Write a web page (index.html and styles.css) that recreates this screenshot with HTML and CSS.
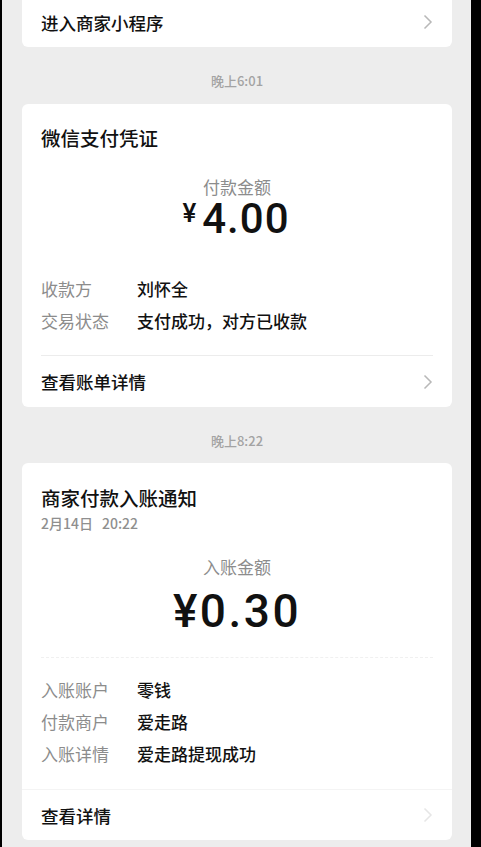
FILE: index.html
```html
<!DOCTYPE html>
<html lang="zh-CN">
<head>
    <meta charset="UTF-8">
    <meta name="viewport" content="width=device-width, initial-scale=1.0">
    <title>微信支付</title>
    <link rel="stylesheet" href="styles.css">
</head>
<body>
    <div class="frame">
        <div class="screen">
            <!-- card cut off by the top of the screen -->
            <div class="card card-top">
                <div class="link-row">
                    <span>进入商家小程序</span>
                    <svg class="chevron" width="10" height="16" viewBox="0 0 10 16"><polyline points="1.5,1.5 8,8 1.5,14.5"/></svg>
                </div>
            </div>

            <div class="time">晚上6:01</div>

            <div class="card">
                <div class="card-body">
                    <h2 class="card-title">微信支付凭证</h2>
                    <div class="amount-label">付款金额</div>
                    <div class="amount amount-small-sign"><span class="sign">¥</span>4.00</div>
                    <div class="info-list">
                        <div class="info-row"><span class="info-key">收款方</span><span class="info-val">刘怀全</span></div>
                        <div class="info-row"><span class="info-key">交易状态</span><span class="info-val">支付成功，对方已收款</span></div>
                    </div>
                </div>
                <div class="link-row link-inset">
                    <span>查看账单详情</span>
                    <svg class="chevron" width="10" height="16" viewBox="0 0 10 16"><polyline points="1.5,1.5 8,8 1.5,14.5"/></svg>
                </div>
            </div>

            <div class="time">晚上8:22</div>

            <div class="card">
                <div class="card-body">
                    <h2 class="card-title title-notice">商家付款入账通知</h2>
                    <div class="card-date"><span>2月14日</span><span>20:22</span></div>
                    <div class="amount-label label-notice">入账金额</div>
                    <div class="amount amount-big">¥0.30</div>
                    <div class="dash"></div>
                    <div class="info-list info-notice">
                        <div class="info-row"><span class="info-key">入账账户</span><span class="info-val">零钱</span></div>
                        <div class="info-row"><span class="info-key">付款商户</span><span class="info-val">爱走路</span></div>
                        <div class="info-row"><span class="info-key">入账详情</span><span class="info-val">爱走路提现成功</span></div>
                    </div>
                </div>
                <div class="link-row link-full">
                    <span>查看详情</span>
                    <svg class="chevron chevron-faint" width="10" height="16" viewBox="0 0 10 16"><polyline points="1.5,1.5 8,8 1.5,14.5"/></svg>
                </div>
            </div>
        </div>
        <div class="bezel"></div>
    </div>
</body>
</html>
```

FILE: styles.css
```css
html {
    background-color: #000;
}

body {
    margin: 0;
    padding: 0;
    background-color: #000;
    font-family: "Noto Sans CJK SC", "Noto Sans", sans-serif;
    color: #111;
    height: 847px;
    overflow: hidden;
}

.frame {
    display: flex;
    height: 847px;
    padding-left: 2px;
}

.screen {
    width: 430px;
    flex-shrink: 0;
    background-color: #ededed;
    padding: 0 19px 0 20px;
    overflow: hidden;
}

.bezel {
    flex: 1;
    background-color: #000;
}

.card {
    background-color: #fff;
    border-radius: 6px;
}

.card-top {
    margin-top: -3px;
    border-radius: 0 0 6px 6px;
}

.card-body {
    padding: 0 19px;
}

.time {
    padding: 24px 0 13px;
    line-height: 20px;
    font-size: 13px;
    font-weight: 500;
    color: #a3a3a3;
    text-align: center;
}

.time + .card + .time {
    padding-bottom: 12px;
}

.link-row {
    display: flex;
    justify-content: space-between;
    align-items: center;
    height: 50px;
    padding: 0 19px;
    font-size: 17.5px;
    font-weight: 500;
}

.link-inset {
    margin: 0 19px;
    padding: 0;
    height: 51px;
    border-top: 1px solid #ececec;
}

.link-full {
    border-top: 1px solid #f4f4f4;
}

.chevron polyline {
    fill: none;
    stroke: #b8b8b8;
    stroke-width: 1.5;
}

.chevron-faint polyline {
    stroke: #e6e6e6;
}

.card-title {
    margin: 0;
    padding-top: 22px;
    font-size: 19.5px;
    line-height: 24px;
    font-weight: 500;
}

.title-notice {
    padding-top: 23px;
}

.card-date {
    display: flex;
    gap: 9px;
    margin-top: 4px;
    font-size: 14px;
    line-height: 18px;
    font-weight: 500;
    color: #8f8f8f;
}

.amount-label {
    margin-top: 26px;
    font-size: 17px;
    line-height: 22px;
    color: #8c8c8c;
    text-align: center;
}

.label-notice {
    margin-top: 24px;
}

.amount {
    font-family: Roboto, "Noto Sans", sans-serif;
    font-weight: 500;
    text-align: center;
    color: #111;
}

.amount-small-sign {
    font-size: 42px;
    line-height: 42px;
    letter-spacing: 1px;
    padding-right: 2px;
}

.amount-small-sign .sign {
    font-size: 26px;
    line-height: 1;
    vertical-align: 11px;
    margin-right: 6px;
    letter-spacing: 0;
}

.amount-big {
    margin-top: 9px;
    font-size: 46px;
    line-height: 48px;
    letter-spacing: 2.5px;
}

.dash {
    margin-top: 22px;
    border-top: 1px dashed #f0f0f0;
}

.info-list {
    margin-top: 33px;
    padding-bottom: 18px;
}

.info-notice {
    margin-top: 16px;
    padding-bottom: 19px;
}

.info-row {
    display: flex;
    font-size: 17px;
    line-height: 32px;
}

.info-key {
    width: 96px;
    flex-shrink: 0;
    color: #8c8c8c;
}

.info-val {
    font-weight: 500;
}
```
